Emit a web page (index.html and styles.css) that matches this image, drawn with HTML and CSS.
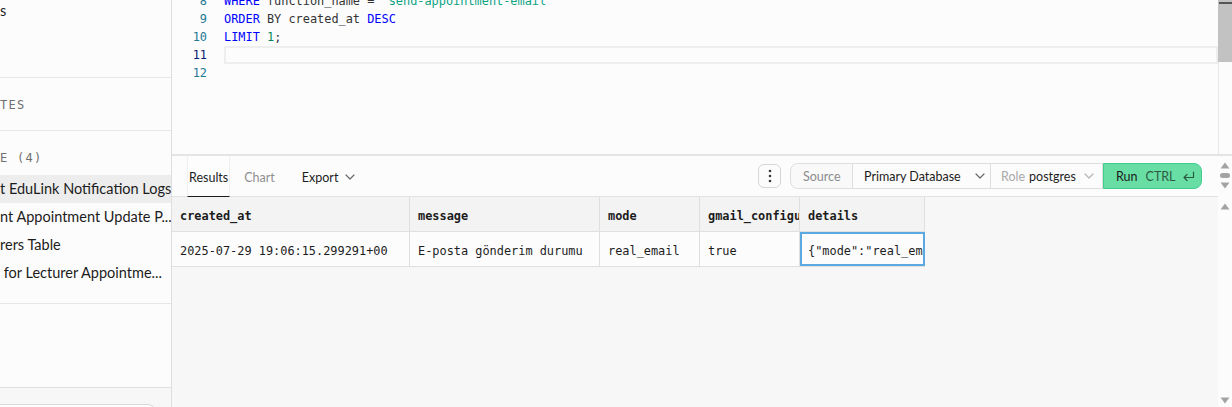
FILE: index.html
```html
<!DOCTYPE html>
<html lang="en">
<head>
<meta charset="utf-8">
<title>SQL Editor</title>
<link rel="stylesheet" href="styles.css">
</head>
<body>
<div class="app">
  <aside class="sidebar">
    <div class="sb-block sb-top">
      <div class="sb-item sb-stub">s</div>
    </div>
    <div class="sb-block sb-notes">
      <div class="sb-heading">TES</div>
    </div>
    <div class="sb-block sb-private">
      <div class="sb-heading sb-heading-list">E (4)</div>
      <ul class="sb-list">
        <li class="sb-item active">t EduLink Notification Logs</li>
        <li class="sb-item">nt Appointment Update P...</li>
        <li class="sb-item">rers Table</li>
        <li class="sb-item">&nbsp;for Lecturer Appointme...</li>
      </ul>
    </div>
    <div class="sb-spacer"></div>
    <div class="sb-footer"><div class="sb-search"></div></div>
  </aside>

  <main class="main">
    <section class="editor">
      <div class="code">
        <div class="line"><span class="ln">8</span><span class="src"><span class="kw">WHERE</span> function_name = <span class="str">'send-appointment-email'</span></span></div>
        <div class="line"><span class="ln">9</span><span class="src"><span class="kw">ORDER</span> BY created_at <span class="kw">DESC</span></span></div>
        <div class="line"><span class="ln">10</span><span class="src"><span class="kw">LIMIT</span> <span class="num">1</span>;</span></div>
        <div class="line current"><span class="ln">11</span><span class="src"></span></div>
        <div class="line"><span class="ln">12</span><span class="src"></span></div>
      </div>
      <div class="vscroll"><div class="thumb"><div class="cursor-mark"></div></div></div>
    </section>

    <section class="results">
      <div class="toolbar-row">
        <div class="toolbar">
          <div class="tabs">
            <span class="tab active">Results</span>
            <span class="tab muted">Chart</span>
            <span class="tab export">Export<svg class="chev" width="10" height="6" viewBox="0 0 10 6"><path d="M1 1l4 4 4-4"/></svg></span>
          </div>
          <div class="actions">
            <button class="dots-btn" type="button">
              <svg width="4" height="14" viewBox="0 0 4 14"><circle cx="2" cy="2" r="1.3"/><circle cx="2" cy="7" r="1.3"/><circle cx="2" cy="12" r="1.3"/></svg>
            </button>
            <div class="seg">
              <span class="seg-item seg-source">Source</span>
              <span class="seg-item seg-db"><span>Primary Database</span><svg class="chev" width="10" height="6" viewBox="0 0 10 6"><path d="M1 1l4 4 4-4"/></svg></span>
              <span class="seg-item seg-role"><span class="muted-label">Role</span><span class="role-name">postgres</span><svg class="chev light" width="10" height="6" viewBox="0 0 10 6"><path d="M1 1l4 4 4-4"/></svg></span>
              <span class="seg-item seg-run"><span>Run</span><span class="kbd">CTRL</span><svg class="enter" width="13" height="11" viewBox="0 0 13 11"><path d="M11.5 1v5.5H2M5 3.5L2 6.5l3 3"/></svg></span>
            </div>
          </div>
        </div>
        <div class="mini-scroll">
          <svg width="10" height="7" viewBox="0 0 10 7"><path d="M5 0.5L9.5 6.5H0.5z"/></svg>
          <span class="oval"></span>
          <svg width="10" height="7" viewBox="0 0 10 7"><path d="M0.5 0.5H9.5L5 6.5z"/></svg>
        </div>
      </div>

      <div class="grid-row">
        <div class="grid">
          <div class="gr head">
            <div class="cell c1">created_at</div>
            <div class="cell c2">message</div>
            <div class="cell c3">mode</div>
            <div class="cell c4">gmail_configured</div>
            <div class="cell c5">details</div>
          </div>
          <div class="gr body">
            <div class="cell c1">2025-07-29 19:06:15.299291+00</div>
            <div class="cell c2">E-posta gönderim durumu</div>
            <div class="cell c3">real_email</div>
            <div class="cell c4">true</div>
            <div class="cell c5 selected">{"mode":"real_email","gmail":true}</div>
          </div>
        </div>
        <div class="grid-scroll">
          <svg width="10" height="7" viewBox="0 0 10 7"><path d="M5 0.5L9.5 6.5H0.5z"/></svg>
          <svg width="10" height="7" viewBox="0 0 10 7"><path d="M0.5 0.5H9.5L5 6.5z"/></svg>
        </div>
      </div>
    </section>
  </main>
</div>
</body>
</html>
```

FILE: styles.css
```css
* { box-sizing: border-box; }

html, body {
  margin: 0;
  padding: 0;
  height: 100%;
  overflow: hidden;
}

body {
  font-family: "Lato", "Liberation Sans", sans-serif;
  color: #1c1c1c;
  background: #f8f8f8;
}

.app {
  display: flex;
  height: 407px;
  width: 1232px;
}

/* ---------- Sidebar ---------- */
.sidebar {
  width: 172px;
  flex: 0 0 172px;
  background: #fcfcfc;
  border-right: 1px solid #dedede;
  display: flex;
  flex-direction: column;
  overflow: hidden;
}

.sb-block {
  border-bottom: 1px solid #e6e6e6;
  flex-shrink: 0;
}

.sb-top {
  height: 78px;
}

.sb-stub {
  margin-top: -3px;
}

.sb-notes {
  height: 53px;
  display: flex;
  align-items: center;
  padding-top: 1px;
}

.sb-heading {
  font-family: "DejaVu Sans Mono", "Liberation Mono", monospace;
  font-size: 12px;
  letter-spacing: 1.3px;
  color: #707070;
  line-height: 16px;
  white-space: nowrap;
}

.sb-heading-list {
  padding-top: 19px;
  margin-bottom: 9px;
}

.sb-private {
  height: 173px;
}

.sb-list {
  list-style: none;
  margin: 0;
  padding: 0;
}

.sb-item {
  height: 28px;
  line-height: 28px;
  font-size: 14.5px;
  white-space: nowrap;
  overflow: hidden;
  color: #1c1c1c;
}

.sb-item.active {
  background: #ededed;
}

.sb-spacer {
  height: 84px;
  flex-shrink: 0;
  border-bottom: 1px solid #e0e0e0;
}

.sb-footer {
  flex: 1;
  background: #f7f7f7;
  padding-top: 16px;
}

.sb-search {
  width: 155px;
  height: 24px;
  border: 1px solid #d9d9d9;
  border-left: none;
  border-radius: 0 7px 7px 0;
  background: #fdfdfd;
}

/* ---------- Main ---------- */
.main {
  flex: 1;
  display: flex;
  flex-direction: column;
  min-width: 0;
}

/* Editor */
.editor {
  height: 156px;
  flex: 0 0 156px;
  background: #fcfcfc;
  border-bottom: 2px solid #e4e4e4;
  display: flex;
  overflow: hidden;
}

.code {
  flex: 1;
  margin-top: -8px;
  font-family: "DejaVu Sans Mono", "Liberation Mono", monospace;
  font-size: 11.9px;
  color: #333333;
}

.line {
  display: flex;
  height: 18px;
  line-height: 18px;
}

.ln {
  width: 35px;
  text-align: right;
  color: #237893;
  flex: 0 0 35px;
}

.src {
  margin-left: 17px;
  flex: 1;
  white-space: pre;
}

.line.current .ln {
  color: #0b216f;
}

.line.current .src {
  border: 2px solid #eeeeee;
}

.kw { color: #0000ff; }
.str { color: #0aa383; }
.num { color: #098658; }

.vscroll {
  width: 14px;
  flex: 0 0 14px;
  border-left: 1px solid #e6e6e6;
}

.thumb {
  height: 62px;
  background: #c2c2c2;
  padding-top: 2px;
  margin-left: -1px;
}

.cursor-mark {
  height: 2px;
  background: #555555;
  margin-left: 1px;
}

/* Results */
.results {
  flex: 1;
  display: flex;
  flex-direction: column;
  background: #f7f7f7;
}

.toolbar-row {
  display: flex;
  height: 41px;
  flex: 0 0 41px;
}

.toolbar {
  flex: 1;
  display: flex;
  align-items: center;
  justify-content: space-between;
  background: #fcfcfc;
  border-bottom: 1px solid #e2e2e2;
  padding-left: 15px;
}

.tabs {
  display: flex;
  align-items: stretch;
  height: 100%;
  font-size: 12.5px;
}

.tab {
  display: flex;
  align-items: center;
  padding: 2px 0 0;
}

.tab.active {
  padding: 2px 1px 0;
  border-left: 1px solid #f0f0f0;
  border-right: 1px solid #f0f0f0;
  border-bottom: 1px solid #1c1c1c;
  background: #fdfdfd;
  margin-bottom: -1px;
}

.tab.muted {
  color: #8f8f8f;
  margin-left: 14px;
}

.tab.export {
  margin-left: 27px;
  gap: 7px;
}

.chev {
  fill: none;
  stroke: #6b6b6b;
  stroke-width: 1.2;
  stroke-linecap: round;
  stroke-linejoin: round;
}

.chev.light { stroke: #b5b5b5; }

.actions {
  display: flex;
  align-items: center;
  gap: 9px;
  padding-right: 16px;
}

.dots-btn {
  width: 23px;
  height: 24px;
  border: 1px solid #d6d6d6;
  border-radius: 6px;
  background: #fcfcfc;
  display: flex;
  align-items: center;
  justify-content: center;
  padding: 0;
  fill: #3a3a3a;
}

.seg {
  display: flex;
  height: 26px;
  font-size: 12.5px;
}

.seg-item {
  display: flex;
  align-items: center;
  border: 1px solid #dedede;
  border-left: none;
  background: #fcfcfc;
  white-space: nowrap;
}

.seg-source {
  width: 63px;
  padding-left: 12px;
  color: #8c8c8c;
  border-left: 1px solid #dedede;
  border-radius: 8px 0 0 8px;
  background: #f9f9f9;
}

.seg-db {
  width: 138px;
  padding-left: 11px;
  gap: 14px;
}

.seg-role {
  width: 112px;
  padding-left: 10px;
}

.seg-role .muted-label { color: #a8a8a8; }
.seg-role .role-name { margin-left: 4px; }
.seg-role .chev { margin-left: 8px; }

.seg-run {
  width: 99px;
  padding-left: 12px;
  background: #69dea4;
  border: 1px solid #3ecf8e;
  border-radius: 0 8px 8px 0;
  color: #1c1c1c;
}

.kbd {
  color: #2c5b44;
  margin-left: 8px;
}

.enter {
  margin-left: 6px;
  fill: none;
  stroke: #2c5b44;
  stroke-width: 1.2;
  stroke-linecap: round;
  stroke-linejoin: round;
}

.mini-scroll {
  width: 14px;
  flex: 0 0 14px;
  background: #fcfcfc;
  display: flex;
  flex-direction: column;
  align-items: center;
  gap: 4px;
  padding-top: 6px;
  fill: #a3a3a3;
}

.oval {
  width: 10px;
  height: 5px;
  border-radius: 3px;
  background: #a3a3a3;
}

/* Grid */
.grid-row {
  flex: 1;
  display: flex;
}

.grid {
  flex: 1;
  font-family: "DejaVu Sans Mono", "Liberation Mono", monospace;
  font-size: 11.9px;
}

.gr {
  display: flex;
  height: 35px;
  border-bottom: 1px solid #e0e0e0;
  width: 753px;
}

.gr.head {
  background: #f3f3f3;
  font-weight: bold;
}

.gr.body {
  background: #fcfcfc;
}

.cell {
  padding: 3px 8px 0;
  display: flex;
  align-items: center;
  border-right: 1px solid #dfdfdf;
  white-space: pre;
  overflow: hidden;
}

.c1 { width: 238px; }
.c2 { width: 190px; }
.c3 { width: 100px; }
.c4 { width: 100px; }
.c5 { width: 125px; }

.cell.selected {
  border: 2px solid #5ca8e0;
  padding-left: 6px;
}

.grid-scroll {
  width: 14px;
  flex: 0 0 14px;
  background: #fcfcfc;
  display: flex;
  flex-direction: column;
  align-items: center;
  justify-content: space-between;
  padding: 6px 0 3px;
  fill: #a3a3a3;
}
```
